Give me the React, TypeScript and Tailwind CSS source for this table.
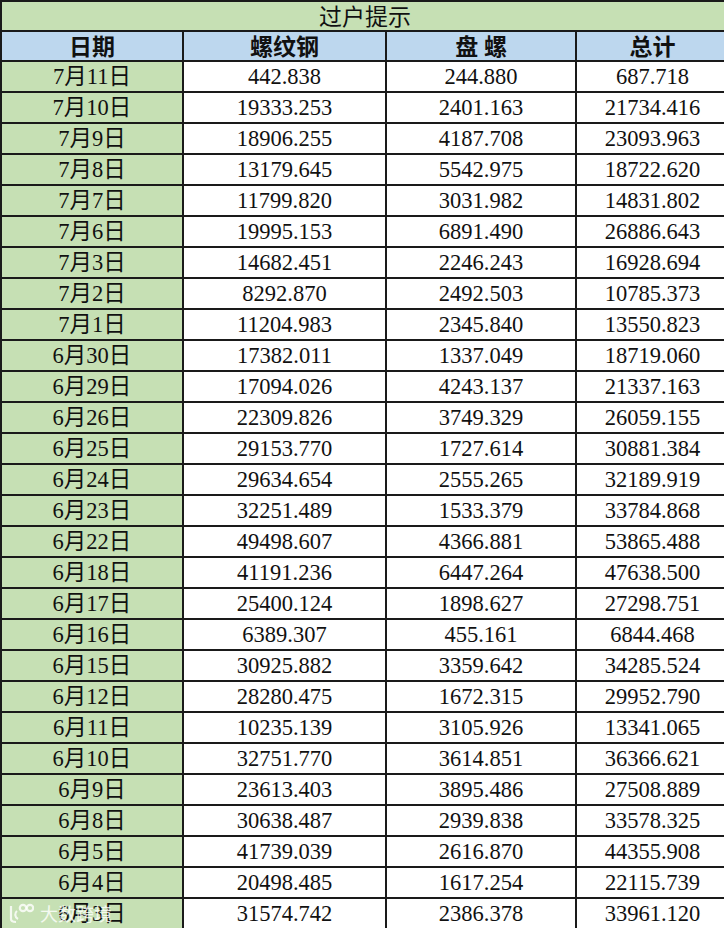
const rows: [string, string, string, string][] = [
  ["7月11日", "442.838", "244.880", "687.718"],
  ["7月10日", "19333.253", "2401.163", "21734.416"],
  ["7月9日", "18906.255", "4187.708", "23093.963"],
  ["7月8日", "13179.645", "5542.975", "18722.620"],
  ["7月7日", "11799.820", "3031.982", "14831.802"],
  ["7月6日", "19995.153", "6891.490", "26886.643"],
  ["7月3日", "14682.451", "2246.243", "16928.694"],
  ["7月2日", "8292.870", "2492.503", "10785.373"],
  ["7月1日", "11204.983", "2345.840", "13550.823"],
  ["6月30日", "17382.011", "1337.049", "18719.060"],
  ["6月29日", "17094.026", "4243.137", "21337.163"],
  ["6月26日", "22309.826", "3749.329", "26059.155"],
  ["6月25日", "29153.770", "1727.614", "30881.384"],
  ["6月24日", "29634.654", "2555.265", "32189.919"],
  ["6月23日", "32251.489", "1533.379", "33784.868"],
  ["6月22日", "49498.607", "4366.881", "53865.488"],
  ["6月18日", "41191.236", "6447.264", "47638.500"],
  ["6月17日", "25400.124", "1898.627", "27298.751"],
  ["6月16日", "6389.307", "455.161", "6844.468"],
  ["6月15日", "30925.882", "3359.642", "34285.524"],
  ["6月12日", "28280.475", "1672.315", "29952.790"],
  ["6月11日", "10235.139", "3105.926", "13341.065"],
  ["6月10日", "32751.770", "3614.851", "36366.621"],
  ["6月9日", "23613.403", "3895.486", "27508.889"],
  ["6月8日", "30638.487", "2939.838", "33578.325"],
  ["6月5日", "41739.039", "2616.870", "44355.908"],
  ["6月4日", "20498.485", "1617.254", "22115.739"],
  ["6月3日", "31574.742", "2386.378", "33961.120"],
];

const serif = "font-['Liberation_Serif','Noto_Sans_CJK_SC',serif]";

export default function App() {
  return (
    <div className="relative w-[724px] h-[929px] overflow-hidden bg-white">
      <div
        className={`grid grid-cols-[180px_201px_188px_151px] grid-rows-[28px_28px_repeat(28,29px)] gap-[2px] bg-[#1a1a1a] pl-[2px] pt-[2px] w-[726px] text-[#111] ${serif}`}
      >
        <div className="col-span-4 bg-[#c6e0b4] flex items-center justify-center text-[23px] leading-none pt-[3px]">
          过户提示
        </div>
        {["日期", "螺纹钢", "盘 螺", "总计"].map((h) => (
          <div
            key={h}
            className="bg-[#bdd7ee] flex items-center justify-center text-[23px] font-bold leading-none whitespace-pre pt-[2px]"
          >
            {h}
          </div>
        ))}
        {rows.map((r) =>
          r.map((c, i) => (
            <div
              key={r[0] + i}
              className={`${i === 0 ? "bg-[#c6e0b4]" : "bg-white"} flex items-center justify-center text-[22.5px] leading-none pt-[2px]`}
            >
              {c}
            </div>
          ))
        )}
      </div>
      <div className="absolute left-[8px] top-[902px] flex items-center gap-[6px] text-white/80 font-['Noto_Sans_CJK_SC',sans-serif]">
        <svg width="26" height="22" viewBox="0 0 26 22" fill="none" stroke="currentColor" strokeWidth="2.2">
          <path d="M3 4v13c0 2 2 3 5 3" />
          <path d="M9 9c-2.5 2-2.5 6 1 8" />
          <circle cx="15" cy="6" r="3.2" />
          <circle cx="22" cy="6" r="3.2" />
        </svg>
        <span className="text-[18px] leading-none">大数跨境</span>
      </div>
    </div>
  );
}
